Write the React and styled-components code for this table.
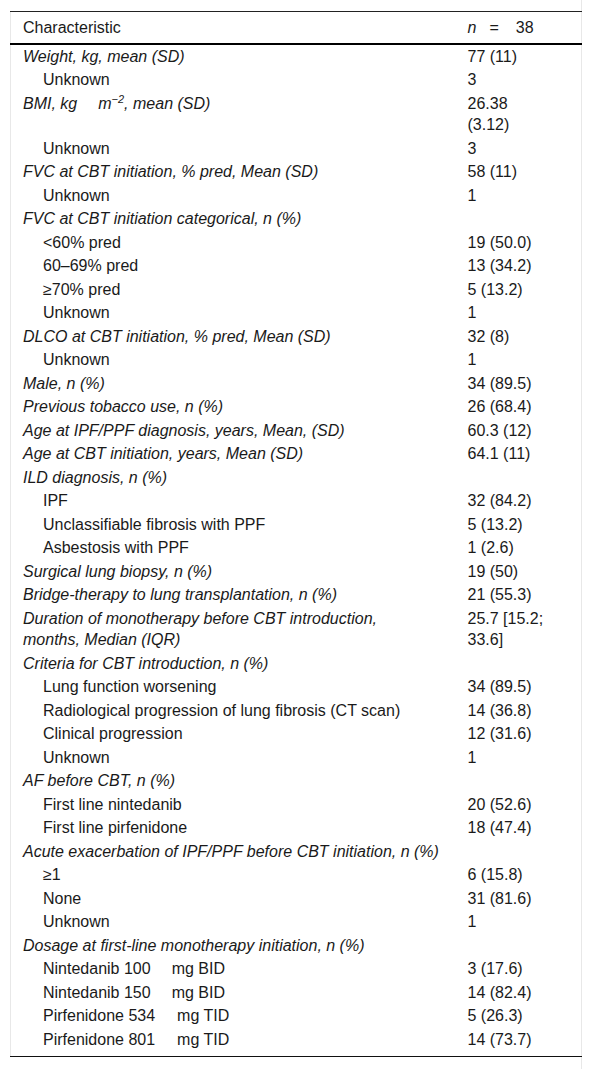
import React from "react";
import styled, { createGlobalStyle } from "styled-components";

const GlobalStyle = createGlobalStyle`
  html, body {
    margin: 0;
    padding: 0;
    background: #ffffff;
  }
  body {
    font-family: "Liberation Sans", Arial, sans-serif;
    color: #1a1a1a;
  }
`;

const Frame = styled.div`
  width: 582px;
  box-sizing: border-box;
  padding: 11px 0 12px 10px;
  border-right: 1px solid #e8e8e8;
`;

const Table = styled.table`
  width: 571px;
  border-collapse: collapse;
  table-layout: fixed;
  font-size: 16px;
  line-height: 21.5px;
  border-left: 1px solid #e8e8e8;
  border-bottom: 1px solid #111;
`;

const HeadRow = styled.tr`
  border-top: 1px solid #222;
  border-bottom: 2px solid #000;
`;

const HeadCell = styled.th`
  font-weight: normal;
  text-align: left;
  vertical-align: top;
  padding: 5px ${(p) => (p.$value ? "34px" : "25px")} 4px 12px;
`;

const Row = styled.tr`
  &:last-child td {
    padding-bottom: 6px;
  }
`;

const LabelCell = styled.td`
  vertical-align: top;
  padding: 1px 25px 1px ${(p) => (p.$indent ? "32px" : "12px")};
  font-style: ${(p) => (p.$indent ? "normal" : "italic")};
`;

const ValueCell = styled.td`
  vertical-align: top;
  padding: 1px 34px 1px 12px;
`;

const Gap = styled.span`
  display: inline-block;
  width: ${(p) => p.$w}px;
`;

const Sup = styled.sup`
  font-size: 11px;
  line-height: 0;
  vertical-align: 6px;
`;

const Em = styled.span`
  font-style: italic;
`;

const rows = [
  { label: "Weight, kg, mean (SD)", value: "77 (11)" },
  { label: "Unknown", value: "3", sub: true },
  {
    label: (
      <>
        BMI, kg<Gap $w={21} />m<Sup>−2</Sup>, mean (SD)
      </>
    ),
    value: "26.38 (3.12)",
  },
  { label: "Unknown", value: "3", sub: true },
  { label: "FVC at CBT initiation, % pred, Mean (SD)", value: "58 (11)" },
  { label: "Unknown", value: "1", sub: true },
  { label: "FVC at CBT initiation categorical, n (%)" },
  { label: "<60% pred", value: "19 (50.0)", sub: true },
  { label: "60–69% pred", value: "13 (34.2)", sub: true },
  { label: "≥70% pred", value: "5 (13.2)", sub: true },
  { label: "Unknown", value: "1", sub: true },
  { label: "DLCO at CBT initiation, % pred, Mean (SD)", value: "32 (8)" },
  { label: "Unknown", value: "1", sub: true },
  { label: "Male, n (%)", value: "34 (89.5)" },
  { label: "Previous tobacco use, n (%)", value: "26 (68.4)" },
  { label: "Age at IPF/PPF diagnosis, years, Mean, (SD)", value: "60.3 (12)" },
  { label: "Age at CBT initiation, years, Mean (SD)", value: "64.1 (11)" },
  { label: "ILD diagnosis, n (%)" },
  { label: "IPF", value: "32 (84.2)", sub: true },
  { label: "Unclassifiable fibrosis with PPF", value: "5 (13.2)", sub: true },
  { label: "Asbestosis with PPF", value: "1 (2.6)", sub: true },
  { label: "Surgical lung biopsy, n (%)", value: "19 (50)" },
  { label: "Bridge-therapy to lung transplantation, n (%)", value: "21 (55.3)" },
  {
    label: "Duration of monotherapy before CBT introduction, months, Median (IQR)",
    value: "25.7 [15.2; 33.6]",
  },
  { label: "Criteria for CBT introduction, n (%)" },
  { label: "Lung function worsening", value: "34 (89.5)", sub: true },
  {
    label: "Radiological progression of lung fibrosis (CT scan)",
    value: "14 (36.8)",
    sub: true,
  },
  { label: "Clinical progression", value: "12 (31.6)", sub: true },
  { label: "Unknown", value: "1", sub: true },
  { label: "AF before CBT, n (%)" },
  { label: "First line nintedanib", value: "20 (52.6)", sub: true },
  { label: "First line pirfenidone", value: "18 (47.4)", sub: true },
  { label: "Acute exacerbation of IPF/PPF before CBT initiation, n (%)" },
  { label: "≥1", value: "6 (15.8)", sub: true },
  { label: "None", value: "31 (81.6)", sub: true },
  { label: "Unknown", value: "1", sub: true },
  { label: "Dosage at first-line monotherapy initiation, n (%)" },
  {
    label: (
      <>
        Nintedanib 100<Gap $w={21} />mg BID
      </>
    ),
    value: "3 (17.6)",
    sub: true,
  },
  {
    label: (
      <>
        Nintedanib 150<Gap $w={21} />mg BID
      </>
    ),
    value: "14 (82.4)",
    sub: true,
  },
  {
    label: (
      <>
        Pirfenidone 534<Gap $w={22} />mg TID
      </>
    ),
    value: "5 (26.3)",
    sub: true,
  },
  {
    label: (
      <>
        Pirfenidone 801<Gap $w={22} />mg TID
      </>
    ),
    value: "14 (73.7)",
    sub: true,
  },
];

export default function App() {
  return (
    <>
      <GlobalStyle />
      <Frame>
        <Table>
          <colgroup>
            <col style={{ width: 445 }} />
            <col style={{ width: 126 }} />
          </colgroup>
          <thead>
            <HeadRow>
              <HeadCell>Characteristic</HeadCell>
              <HeadCell $value>
                <Em>n</Em>
                <Gap $w={13} />=<Gap $w={17} />38
              </HeadCell>
            </HeadRow>
          </thead>
          <tbody>
            {rows.map((r, i) =>
              r.value === undefined ? (
                <Row key={i}>
                  <LabelCell colSpan={2} $indent={r.sub}>
                    {r.label}
                  </LabelCell>
                </Row>
              ) : (
                <Row key={i}>
                  <LabelCell $indent={r.sub}>{r.label}</LabelCell>
                  <ValueCell>{r.value}</ValueCell>
                </Row>
              )
            )}
          </tbody>
        </Table>
      </Frame>
    </>
  );
}
